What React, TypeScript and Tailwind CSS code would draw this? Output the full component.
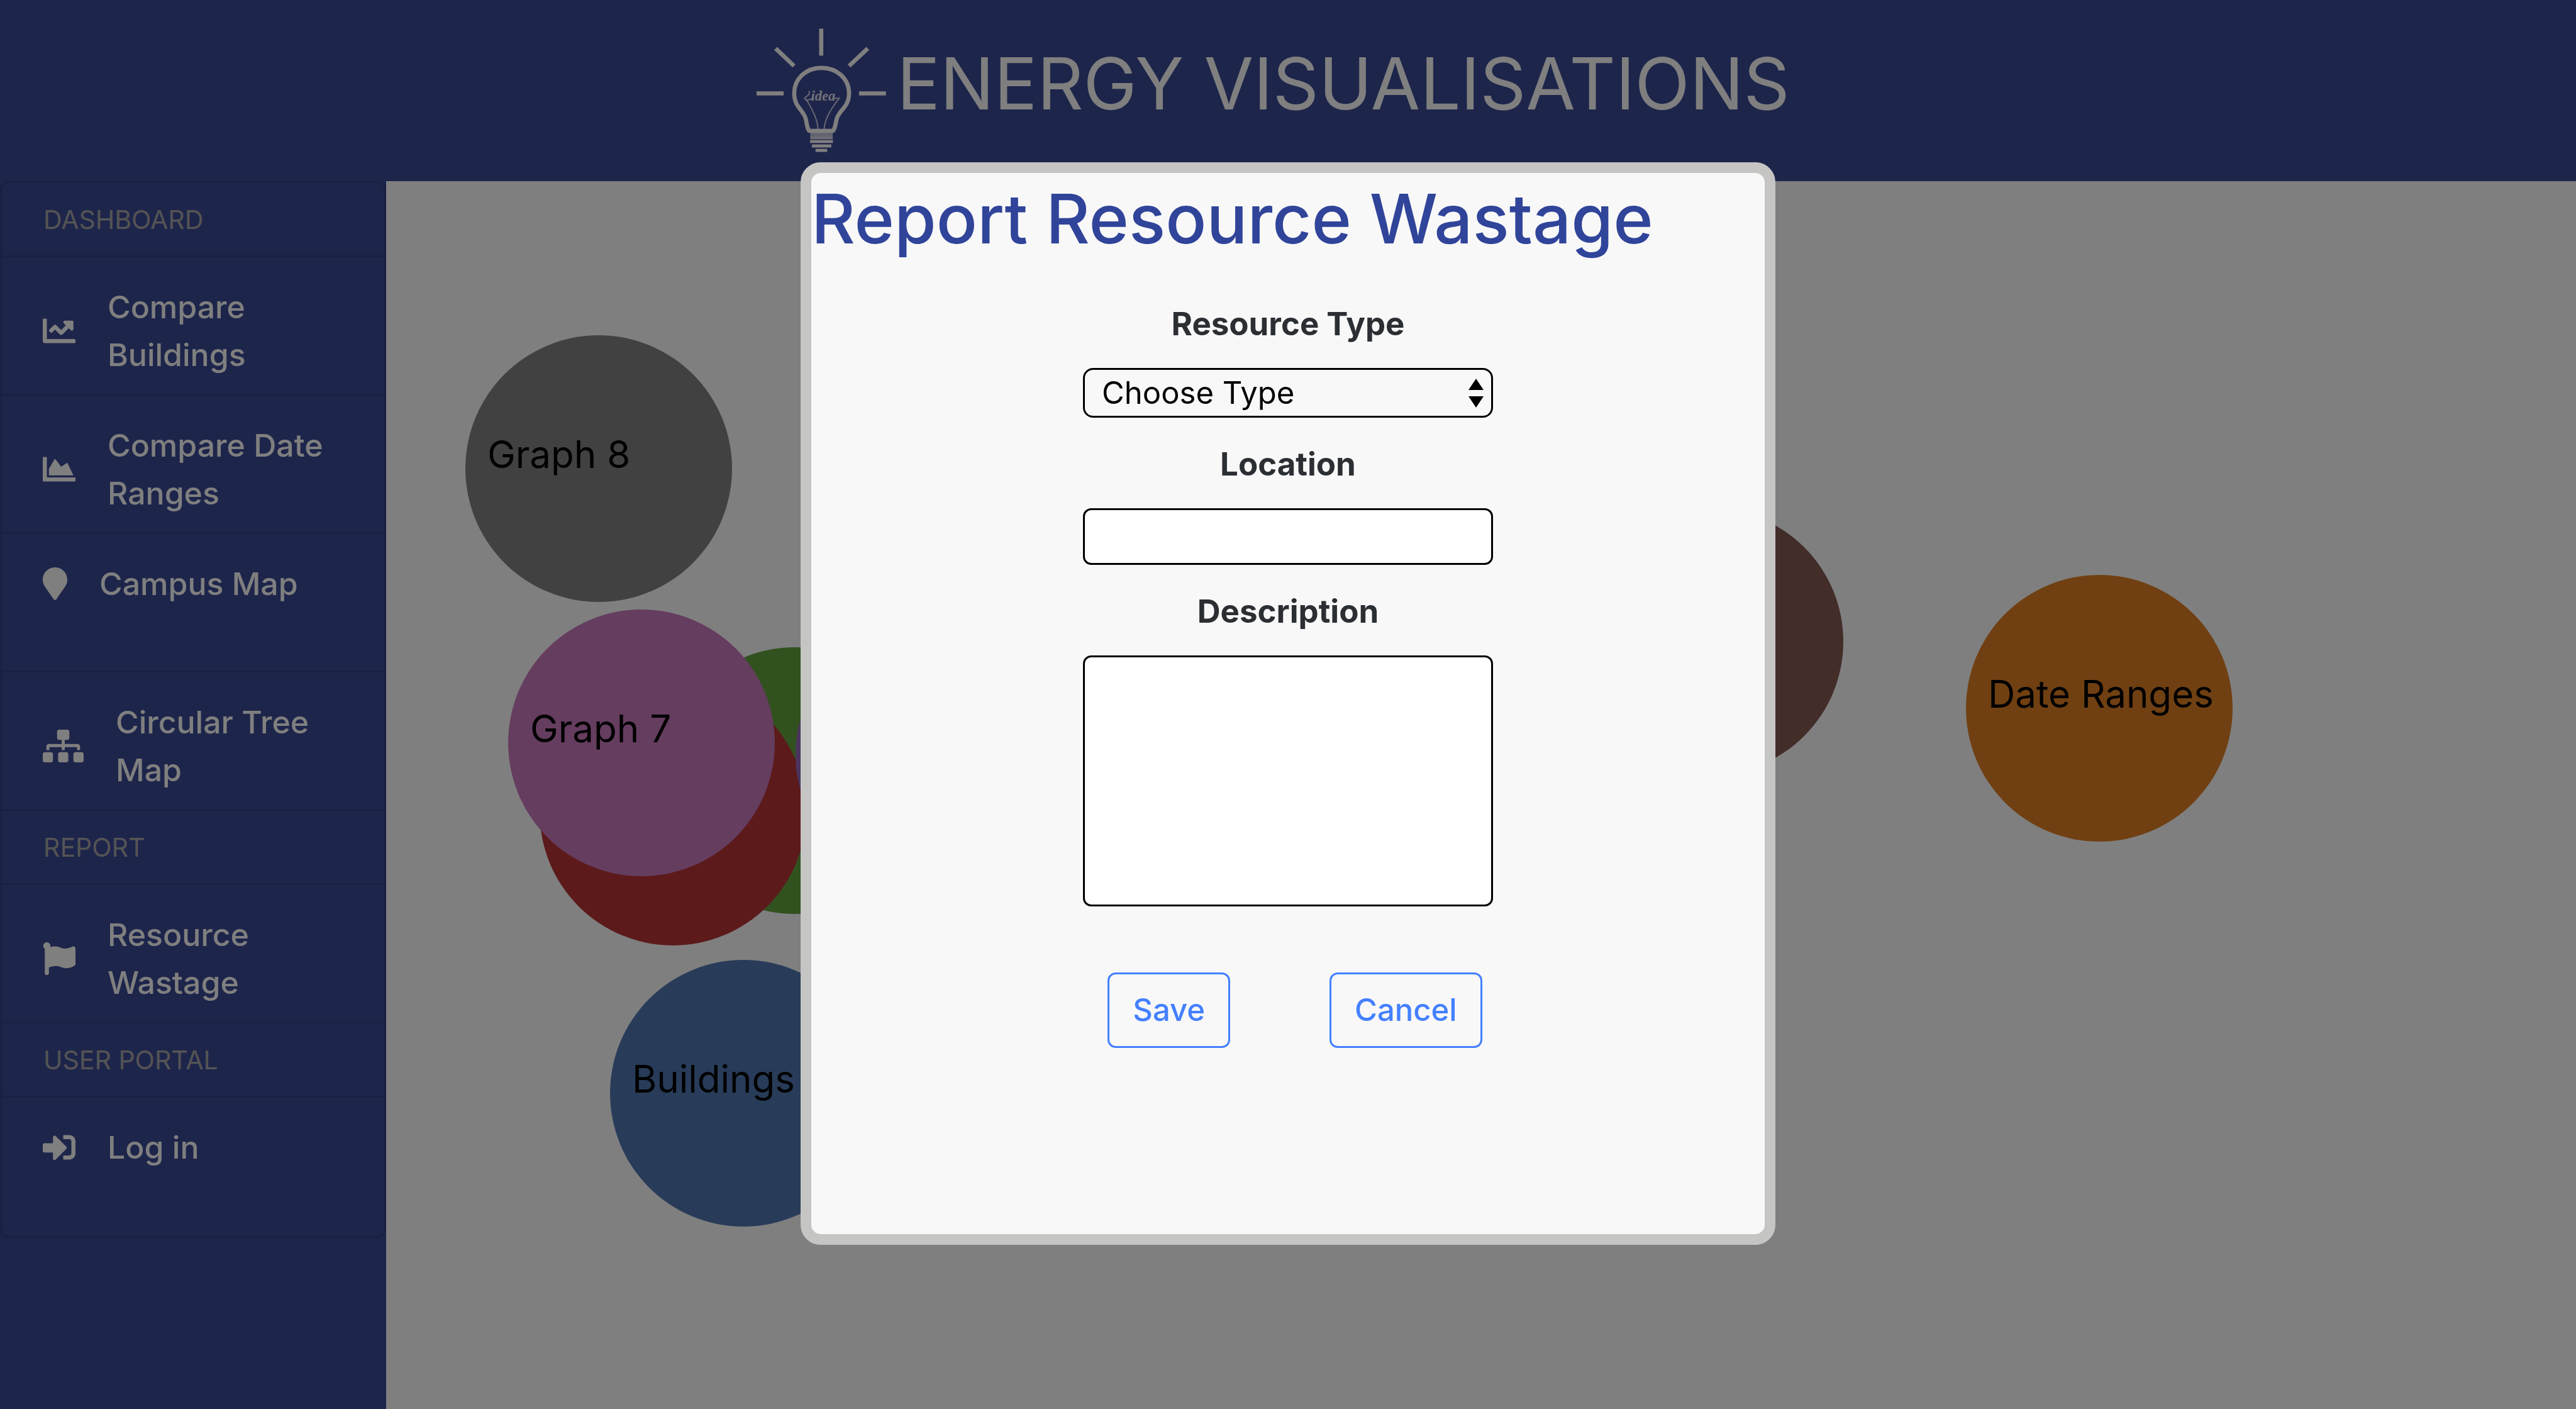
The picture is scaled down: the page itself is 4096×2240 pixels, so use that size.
import type { ReactNode } from "react";
import type { IconType } from "react-icons";
import {
  FaChartArea,
  FaChartLine,
  FaFlag,
  FaMapMarker,
  FaSignInAlt,
  FaSitemap,
} from "react-icons/fa";

function IdeaLogo() {
  return (
    <svg
      viewBox="120 60 960 940"
      className="h-[207px] w-[212px] shrink-0"
      fill="none"
      stroke="#ffffff"
      strokeWidth="30"
      aria-hidden="true"
    >
      <path d="M599 85V280" />
      <path d="M132 553H328" />
      <path d="M872 553H1066" />
      <path d="M270 228L403 355" />
      <path d="M935 228L800 355" />
      <path
        d="M512 823C494 800 496 765 486 732C468 670 404 650 404 553C404 445 490 368 600 368C712 368 800 445 800 553C800 650 732 670 712 732C702 765 704 800 684 823Z"
        strokeLinejoin="round"
      />
      <path d="M520 845H682" strokeWidth="30" strokeOpacity="0.7" />
      <path d="M520 872H682" strokeWidth="24" strokeOpacity="0.8" />
      <path d="M518 900H684" strokeWidth="20" />
      <path d="M532 932H672" strokeWidth="22" />
      <path d="M558 964H642" strokeWidth="22" />
      <g strokeWidth="9" strokeOpacity="0.75">
        <path d="M575 812C575 750 545 690 500 610L478 588L512 560V535" />
        <path d="M620 812C625 740 660 680 715 605L730 588H690" />
        <path d="M490 602L545 590" />
      </g>
      <text
        x="525"
        y="604"
        fontSize="102"
        fontStyle="italic"
        fontWeight="bold"
        fontFamily="'Liberation Serif', serif"
        fill="#ffffff"
        fillOpacity="0.85"
        stroke="none"
      >
        idea
      </text>
    </svg>
  );
}

function SectionHeading({ children }: { children: ReactNode }) {
  return (
    <li className="flex h-[118px] items-center border-b-[3px] border-black/12 px-[66px] text-[41px] leading-[62px] text-[#a8a8a8]">
      {children}
    </li>
  );
}

function NavItem({
  icon: Icon,
  iconClass,
  label,
}: {
  icon: IconType;
  iconClass: string;
  label: string;
}) {
  return (
    <li className="h-[220px] border-b-[3px] border-black/12 last:border-b-0">
      <a
        href="#"
        className="flex items-center gap-[51px] pt-[41px] pr-[50px] pl-[65px] text-[50px] leading-[76px] font-medium text-white"
      >
        <Icon className={iconClass} />
        <span>{label}</span>
      </a>
    </li>
  );
}

function Sidebar() {
  return (
    <nav className="w-[15%] shrink-0 bg-[#3c4a96]">
      <ul className="rounded-[13px] border-[3px] border-black/12">
        <SectionHeading>DASHBOARD</SectionHeading>
        <NavItem icon={FaChartLine} iconClass="h-[52px] w-[52px] shrink-0" label="Compare Buildings" />
        <NavItem icon={FaChartArea} iconClass="h-[52px] w-[52px] shrink-0" label="Compare Date Ranges" />
        <NavItem icon={FaMapMarker} iconClass="h-[52px] w-[39px] shrink-0" label="Campus Map" />
        <NavItem icon={FaSitemap} iconClass="h-[52px] w-[65px] shrink-0" label="Circular Tree Map" />
        <SectionHeading>REPORT</SectionHeading>
        <NavItem icon={FaFlag} iconClass="h-[52px] w-[52px] shrink-0" label="Resource Wastage" />
        <SectionHeading>USER PORTAL</SectionHeading>
        <NavItem icon={FaSignInAlt} iconClass="h-[52px] w-[52px] shrink-0" label="Log in" />
      </ul>
    </nav>
  );
}

const bubbles = [
  { x: 568, y: 1450, color: "#5078b2", label: "Buildings" },
  { x: 2724, y: 838, color: "#e08024", label: "Date Ranges" },
  { x: 650, y: 953, color: "#62a43e", label: "" },
  { x: 456, y: 1003, color: "#b83436", label: "" },
  { x: 863, y: 912, color: "#966ac0", label: "" },
  { x: 2105, y: 732, color: "#845a52", label: "" },
  { x: 406, y: 893, color: "#ca7abe", label: "Graph 7" },
  { x: 338, y: 457, color: "#828282", label: "Graph 8" },
];

function BubbleChart() {
  return (
    <main className="min-w-0 flex-1 bg-white">
      <svg className="h-full w-full">
        {bubbles.map((b) => (
          <g key={b.color}>
            <circle cx={b.x} cy={b.y} r="212" fill={b.color} />
            {b.label && (
              <text x={b.x - 177} y={b.y - 1} fontSize="60" fill="#000000">
                {b.label}
              </text>
            )}
          </g>
        ))}
      </svg>
    </main>
  );
}

const labelClass = "text-center text-[51px] leading-[76px] font-bold text-[#2b2f33]";

function ReportDialog() {
  return (
    <div className="fixed inset-0 flex items-start justify-center bg-black/50 pt-[258px]">
      <form
        role="dialog"
        aria-labelledby="report-title"
        className="w-full max-w-[1550px] rounded-[32px] border-[17px] border-[#c5c5c3] bg-[#f8f8f8] pb-[296px]"
      >
        <h2
          id="report-title"
          className="text-[108px] leading-[146px] font-medium whitespace-nowrap text-[#30449a]"
        >
          Report Resource Wastage
        </h2>
        <div className="mx-auto mt-14 flex w-[652px] flex-col">
          <label htmlFor="type" className={labelClass}>
            Resource Type
          </label>
          <div className="relative mt-8">
            <select
              id="type"
              className="h-[79px] w-full appearance-none rounded-[16px] border-[3px] border-black bg-[#f8f8f8] pl-[27px] text-[49px] text-black"
            >
              <option>Choose Type</option>
            </select>
            <svg
              viewBox="0 0 24 46"
              className="pointer-events-none absolute top-[17px] right-[15px] h-[46px] w-6"
              aria-hidden="true"
            >
              <path d="M12 0L24 18H0Z" />
              <path d="M12 46L24 28H0Z" />
            </svg>
          </div>
          <label htmlFor="location" className={`mt-9 ${labelClass}`}>
            Location
          </label>
          <input
            id="location"
            type="text"
            className="mt-8 h-[90px] rounded-[13px] border-[3px] border-black bg-white px-6 text-[49px]"
          />
          <label htmlFor="description" className={`mt-9 ${labelClass}`}>
            Description
          </label>
          <textarea
            id="description"
            className="mt-8 h-[399px] resize-none rounded-[13px] border-[3px] border-black bg-white px-6 text-[49px]"
          />
        </div>
        <div className="mt-[105px] flex justify-center gap-[158px] pl-[22px] text-[49px] leading-[76px] font-medium text-[#4480ff]">
          <button type="button" className="rounded-[13px] border-[3px] border-[#4480ff] px-[37px] py-[19px]">
            Save
          </button>
          <button type="button" className="rounded-[13px] border-[3px] border-[#4480ff] px-[37px] py-[19px]">
            Cancel
          </button>
        </div>
      </form>
    </div>
  );
}

export default function App() {
  return (
    <div className="flex min-h-screen flex-col font-['Inter','Liberation_Sans',sans-serif]">
      <header className="flex h-[288px] items-start justify-center gap-[14px] bg-[#3c4a96] pt-10 pr-[50px]">
        <IdeaLogo />
        <h1 className="pt-5 text-[114px] leading-[146px] font-normal whitespace-nowrap text-white">
          ENERGY VISUALISATIONS
        </h1>
      </header>
      <div className="flex flex-1">
        <Sidebar />
        <BubbleChart />
      </div>
      <ReportDialog />
    </div>
  );
}
